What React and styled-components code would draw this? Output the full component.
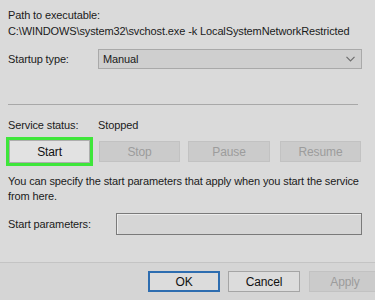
import styled, { createGlobalStyle } from 'styled-components';

const GlobalStyle = createGlobalStyle`
  html, body {
    margin: 0;
    padding: 0;
    background: #dadada;
  }
`;

const Dialog = styled.div`
  width: 375px;
  height: 300px;
  box-sizing: border-box;
  display: flex;
  flex-direction: column;
  overflow: hidden;
  background: #dadada;
  font-family: 'Liberation Sans', Arial, sans-serif;
  font-size: 11px;
  letter-spacing: -0.12px;
  color: #1a1a1a;
`;

const Body = styled.div`
  display: flex;
  flex-direction: column;
  padding: 7px 5px 0 8px;
`;

const Line = styled.div`
  line-height: 16px;
  height: 16px;
  white-space: nowrap;
  margin-top: ${(p) => p.mt || 0}px;
`;

const FieldRow = styled.div`
  display: flex;
  align-items: center;
  margin-top: ${(p) => p.mt || 0}px;
  margin-right: ${(p) => p.mr || 0}px;
`;

const FieldLabel = styled.span`
  width: ${(p) => p.w}px;
  flex: none;
  line-height: 16px;
`;

const Select = styled.div`
  flex: 1;
  height: 20px;
  box-sizing: border-box;
  border: 1px solid #a9a9a9;
  background: #cfcfcf;
  display: flex;
  align-items: center;
  justify-content: space-between;
  padding: 0 6px 0 4px;
`;

const TextBox = styled.div`
  flex: 1;
  height: 22px;
  box-sizing: border-box;
  border: 1px solid #7a7a7a;
  background: #d6d6d6;
  box-shadow: inset 1px 1px 0 #ececec;
`;

const Separator = styled.div`
  height: 1px;
  background: #a8a8a8;
  margin-top: ${(p) => p.mt || 0}px;
  margin-right: 12px;
`;

const ButtonRow = styled.div`
  display: flex;
  align-items: center;
  margin-top: 4px;
  margin-left: -2px;
`;

const Highlight = styled.div`
  width: 87px;
  height: 29px;
  box-sizing: border-box;
  border: 3px solid #3ee63a;
  display: flex;
  margin-right: ${(p) => p.mr}px;
`;

const ServiceButton = styled.div`
  flex: ${(p) => (p.fill ? 1 : 'none')};
  width: ${(p) => (p.fill ? 'auto' : `${p.w}px`)};
  height: ${(p) => (p.fill ? 'auto' : '21px')};
  box-sizing: border-box;
  margin-right: ${(p) => p.mr || 0}px;
  border: 1px solid ${(p) => (p.disabled ? '#c2c2c2' : '#adadad')};
  background: ${(p) => (p.disabled ? '#cbcbcb' : '#e2e2e2')};
  color: ${(p) => (p.disabled ? '#9c9c9c' : '#111')};
  display: flex;
  align-items: center;
  justify-content: center;
  line-height: 16px;
  font-size: 12px;
`;

const Description = styled.div`
  margin-top: 8px;
  line-height: 15px;
`;

const Footer = styled.div`
  margin-top: auto;
  height: 38px;
  box-sizing: border-box;
  border-top: 1px solid #c4c4c4;
  background: #d5d5d5;
  display: flex;
  align-items: flex-start;
  padding: 8px 0 0 148px;
`;

const DialogButton = styled.div`
  width: 72px;
  height: 21px;
  flex: none;
  box-sizing: border-box;
  margin-right: ${(p) => p.mr || 0}px;
  border: ${(p) => (p.primary ? '2px solid #2d6db0' : p.disabled ? '1px solid #c2c2c2' : '1px solid #a5a5a5')};
  background: ${(p) => (p.disabled ? '#cbcbcb' : '#dcdcdc')};
  color: ${(p) => (p.disabled ? '#9c9c9c' : '#111')};
  display: flex;
  align-items: center;
  justify-content: center;
  line-height: 16px;
  font-size: 12px;
`;

const Chevron = () => (
  <svg width="9" height="6" viewBox="0 0 9 6">
    <path d="M0.5 0.8 L4.5 4.8 L8.5 0.8" fill="none" stroke="#6e6e6e" strokeWidth="1.2" />
  </svg>
);

export default function App() {
  return (
    <>
      <GlobalStyle />
      <Dialog>
        <Body>
          <Line>Path to executable:</Line>
          <Line>C:\WINDOWS\system32\svchost.exe -k LocalSystemNetworkRestricted</Line>
          <FieldRow mt={10} mr={8}>
            <FieldLabel w={90}>Startup type:</FieldLabel>
            <Select>
              <span>Manual</span>
              <Chevron />
            </Select>
          </FieldRow>
          <Separator mt={35} />
          <FieldRow mt={12}>
            <FieldLabel w={90}>Service status:</FieldLabel>
            <span>Stopped</span>
          </FieldRow>
          <ButtonRow>
            <Highlight mr={6}>
              <ServiceButton fill>Start</ServiceButton>
            </Highlight>
            <ServiceButton disabled w={81} mr={8}>Stop</ServiceButton>
            <ServiceButton disabled w={82} mr={10}>Pause</ServiceButton>
            <ServiceButton disabled w={81}>Resume</ServiceButton>
          </ButtonRow>
          <Description>
            You can specify the start parameters that apply when you start the service from here.
          </Description>
          <FieldRow mt={9} mr={8}>
            <FieldLabel w={108}>Start parameters:</FieldLabel>
            <TextBox />
          </FieldRow>
        </Body>
        <Footer>
          <DialogButton primary mr={8}>OK</DialogButton>
          <DialogButton mr={9}>Cancel</DialogButton>
          <DialogButton disabled>Apply</DialogButton>
        </Footer>
      </Dialog>
    </>
  );
}
